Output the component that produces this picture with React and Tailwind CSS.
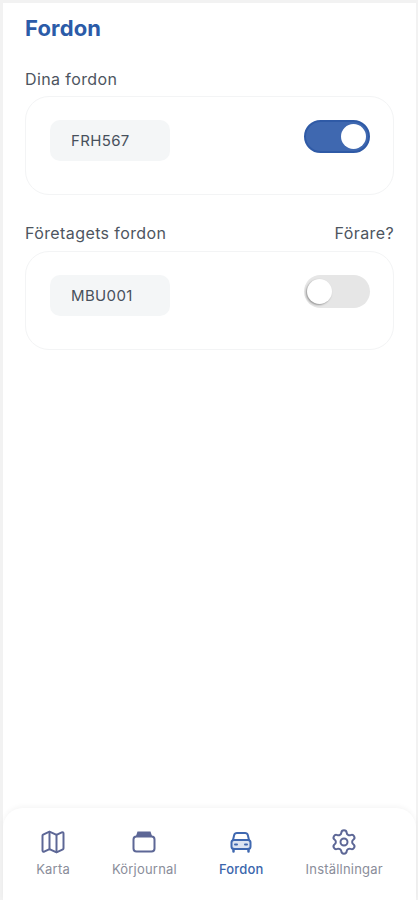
import React from "react";
import { Map, Settings } from "lucide-react";

const Vehicle = ({ reg, on }) => (
  <div className="h-[99px] rounded-[24px] border border-[#f3f4f5] bg-white pl-6 pr-[23px] pt-[23px] flex items-start justify-between">
    <div className="w-[120px] h-[41px] rounded-[10px] bg-[#f4f6f7] flex items-center pl-[21px] pt-[1px] text-[15px] tracking-[0.35px] text-[#47505c]">
      {reg}
    </div>
    {on ? (
      <div className="w-[66px] h-[33px] rounded-full bg-[#3f68b0] border-[2px] border-[#2f5aa6] flex items-center justify-end pr-[2px]">
        <div className="w-[25px] h-[25px] rounded-full bg-white" />
      </div>
    ) : (
      <div className="w-[66px] h-[33px] rounded-full bg-[#e6e6e6] flex items-center pl-[3px]">
        <div className="w-[25px] h-[25px] rounded-full bg-white shadow-[-1px_1px_2px_rgba(0,0,0,0.35)]" />
      </div>
    )}
  </div>
);

const NavItem = ({ icon, label, active }) => (
  <div className="flex flex-col items-center">
    <div className="h-[26px] flex items-center justify-center">{icon}</div>
    <span className={`mt-[6px] text-[13px] leading-4 tracking-[0.2px] whitespace-nowrap ${active ? "font-medium text-[#3b66ac]" : "text-[#8a8d9a]"}`}>
      {label}
    </span>
  </div>
);

const Journal = () => (
  <svg width="24" height="24" viewBox="0 0 24 24" fill="none">
    <path d="M4 6 L5.5 1.5 H18.5 L20 6 Z" fill="#5d6796" />
    <rect x="1.5" y="6.5" width="21" height="15" rx="3" stroke="#5d6796" strokeWidth="2" />
  </svg>
);

const Car = () => (
  <svg width="24" height="24" viewBox="0 0 24 24" fill="none" stroke="#3f68b0" strokeWidth="2" strokeLinecap="round" strokeLinejoin="round">
    <path d="M4 10 L5.2 5 C5.6 3.6 6.6 3 8 3 H16 C17.4 3 18.4 3.6 18.8 5 L20 10" />
    <rect x="2.5" y="10" width="19" height="9" rx="2.5" fill="#3f68b0" fillOpacity="0.18" />
    <path d="M6 14.5 H8 M16 14.5 H18" />
    <path d="M4.5 19 V21.5 M19.5 19 V21.5" strokeWidth="2.5" />
  </svg>
);

export default function App() {
  return (
    <div className="h-[900px] bg-[#f2f2f2] pt-[3px] pl-[3px] pr-[2px] font-['Inter',sans-serif] overflow-hidden">
      <div className="h-full bg-white flex flex-col">
        <main className="flex-1 px-[22px]">
          <h1 className="mt-[13px] text-[22px] leading-[24px] tracking-[0.15px] font-bold text-[#2b5ba8]">Fordon</h1>
          <p className="mt-[29px] text-[16px] leading-[20px] tracking-[0.4px] text-[#4d5560]">Dina fordon</p>
          <div className="mt-[7px]">
            <Vehicle reg="FRH567" on />
          </div>
          <div className="mt-[28px] flex justify-between text-[16px] leading-[20px] tracking-[0.4px] text-[#4d5560]">
            <span>Företagets fordon</span>
            <span>Förare?</span>
          </div>
          <div className="mt-[8px]">
            <Vehicle reg="MBU001" />
          </div>
        </main>
        <nav className="h-[92px] rounded-t-[20px] bg-white shadow-[0_-2px_5px_rgba(0,0,0,0.04)] flex justify-center gap-[42px] pt-[21px]">
          <NavItem icon={<Map size={28} strokeWidth={1.7} color="#5d6796" />} label="Karta" />
          <NavItem icon={<Journal />} label="Körjournal" />
          <NavItem icon={<Car />} label="Fordon" active />
          <NavItem icon={<Settings size={28} strokeWidth={1.7} color="#5d6796" />} label="Inställningar" />
        </nav>
      </div>
    </div>
  );
}
